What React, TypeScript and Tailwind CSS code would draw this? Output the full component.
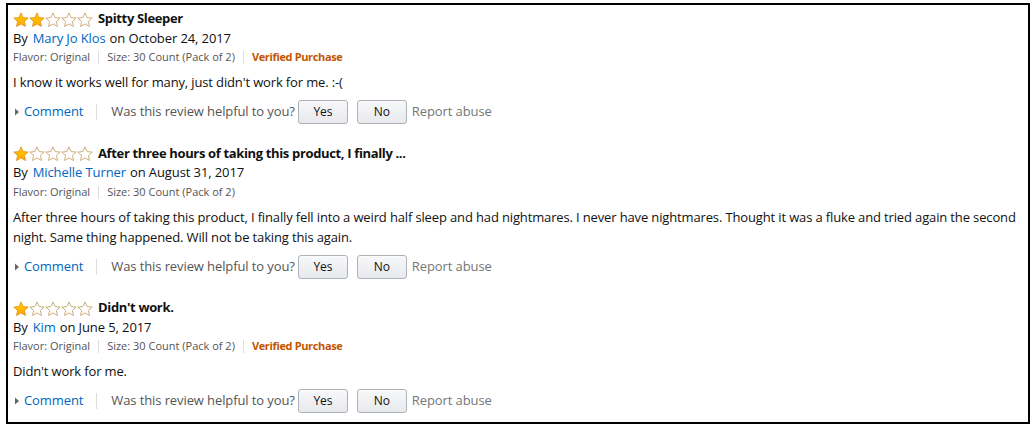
import React from "react";

type Review = {
  stars: number;
  title: string;
  author: string;
  date: string;
  verified: boolean;
  body: string;
};

const reviews: Review[] = [
  {
    stars: 2,
    title: "Spitty Sleeper",
    author: "Mary Jo Klos",
    date: "October 24, 2017",
    verified: true,
    body: "I know it works well for many, just didn't work for me. :-(",
  },
  {
    stars: 1,
    title: "After three hours of taking this product, I finally ...",
    author: "Michelle Turner",
    date: "August 31, 2017",
    verified: false,
    body: "After three hours of taking this product, I finally fell into a weird half sleep and had nightmares. I never have nightmares. Thought it was a fluke and tried again the second night. Same thing happened. Will not be taking this again.",
  },
  {
    stars: 1,
    title: "Didn't work.",
    author: "Kim",
    date: "June 5, 2017",
    verified: true,
    body: "Didn't work for me.",
  },
];

const STAR =
  "M8 0.9 L10.1 5.6 L15.2 6.1 L11.4 9.5 L12.5 14.5 L8 11.9 L3.5 14.5 L4.6 9.5 L0.8 6.1 L5.9 5.6 Z";

function Star({ filled, id }: { filled: boolean; id: string }) {
  return (
    <svg width="16" height="15" viewBox="0 0 16 15" className="block">
      <defs>
        <linearGradient id={id} x1="0" y1="0" x2="0" y2="1">
          <stop offset="0" stopColor="#ffce00" />
          <stop offset="1" stopColor="#ffa700" />
        </linearGradient>
      </defs>
      {filled ? (
        <path d={STAR} fill={`url(#${id})`} stroke="#e38d13" strokeWidth="0.8" strokeLinejoin="round" />
      ) : (
        <path d={STAR} fill="#ffffff" stroke="#c9a56a" strokeWidth="0.9" strokeLinejoin="round" />
      )}
    </svg>
  );
}

function Stars({ n, k }: { n: number; k: number }) {
  return (
    <div className="flex items-center">
      {[0, 1, 2, 3, 4].map((i) => (
        <Star key={i} filled={i < n} id={`g${k}-${i}`} />
      ))}
    </div>
  );
}

function Sep() {
  return <span className="mx-[8px] inline-block h-[13px] w-px bg-[#ddd]" />;
}

function Btn({ label }: { label: string }) {
  return (
    <button className="h-[24px] w-[50px] rounded-[3px] border border-[#adb1b8] bg-gradient-to-b from-[#f7f8fa] to-[#e7e9ec] text-[12px] text-[#111] shadow-[inset_0_1px_0_rgba(255,255,255,0.6)]">
      {label}
    </button>
  );
}

export default function App() {
  return (
    <div className="h-[428px] w-[1035px] bg-white pl-[6px] pt-[3px]" style={{ fontFamily: '"Open Sans", "Noto Sans", Arial, sans-serif' }}>
      <div className="h-[421px] w-[1024px] border-2 border-black pl-[5px] pr-[6px] pt-[4px]">
        {reviews.map((r, k) => (
          <div key={k} className={k > 0 ? "mt-[19.5px]" : ""}>
            <div className="flex h-[20px] items-center">
              <Stars n={r.stars} k={k} />
              <span className="ml-[5px] text-[13px] font-bold tracking-[-0.35px] text-[#111]">{r.title}</span>
            </div>
            <div className="flex h-[19px] items-center text-[13px] tracking-[-0.1px] text-[#111]">
              <span>By</span>
              <span className="ml-[5px] text-[#0066c0]">{r.author}</span>
              <span className="ml-[4px]">on {r.date}</span>
            </div>
            <div className="flex h-[19px] items-center text-[11px] text-[#555]">
              <span>Flavor: Original</span>
              <Sep />
              <span>Size: 30 Count (Pack of 2)</span>
              {r.verified && (
                <>
                  <Sep />
                  <span className="font-bold tracking-[-0.35px] text-[#c45500]">Verified Purchase</span>
                </>
              )}
            </div>
            <p className="mt-[5px] text-[13px] leading-[20px] tracking-[-0.14px] text-[#111]">{r.body}</p>
            <div className="mt-[8px] flex h-[24px] items-center text-[13px] tracking-[-0.1px]">
              <svg width="6" height="8" viewBox="0 0 6 8" className="ml-[1px] mr-[4px]">
                <path d="M1 0.5 L5 4 L1 7.5 Z" fill="#666" />
              </svg>
              <span className="text-[#0066c0]">Comment</span>
              <span className="ml-[13px] mr-[14px] inline-block h-[16px] w-px bg-[#ddd]" />
              <span className="text-[#555]">Was this review helpful to you?</span>
              <div className="ml-[3px] flex gap-[9px]">
                <Btn label="Yes" />
                <Btn label="No" />
              </div>
              <span className="ml-[5px] text-[#767676]">Report abuse</span>
            </div>
          </div>
        ))}
      </div>
    </div>
  );
}
